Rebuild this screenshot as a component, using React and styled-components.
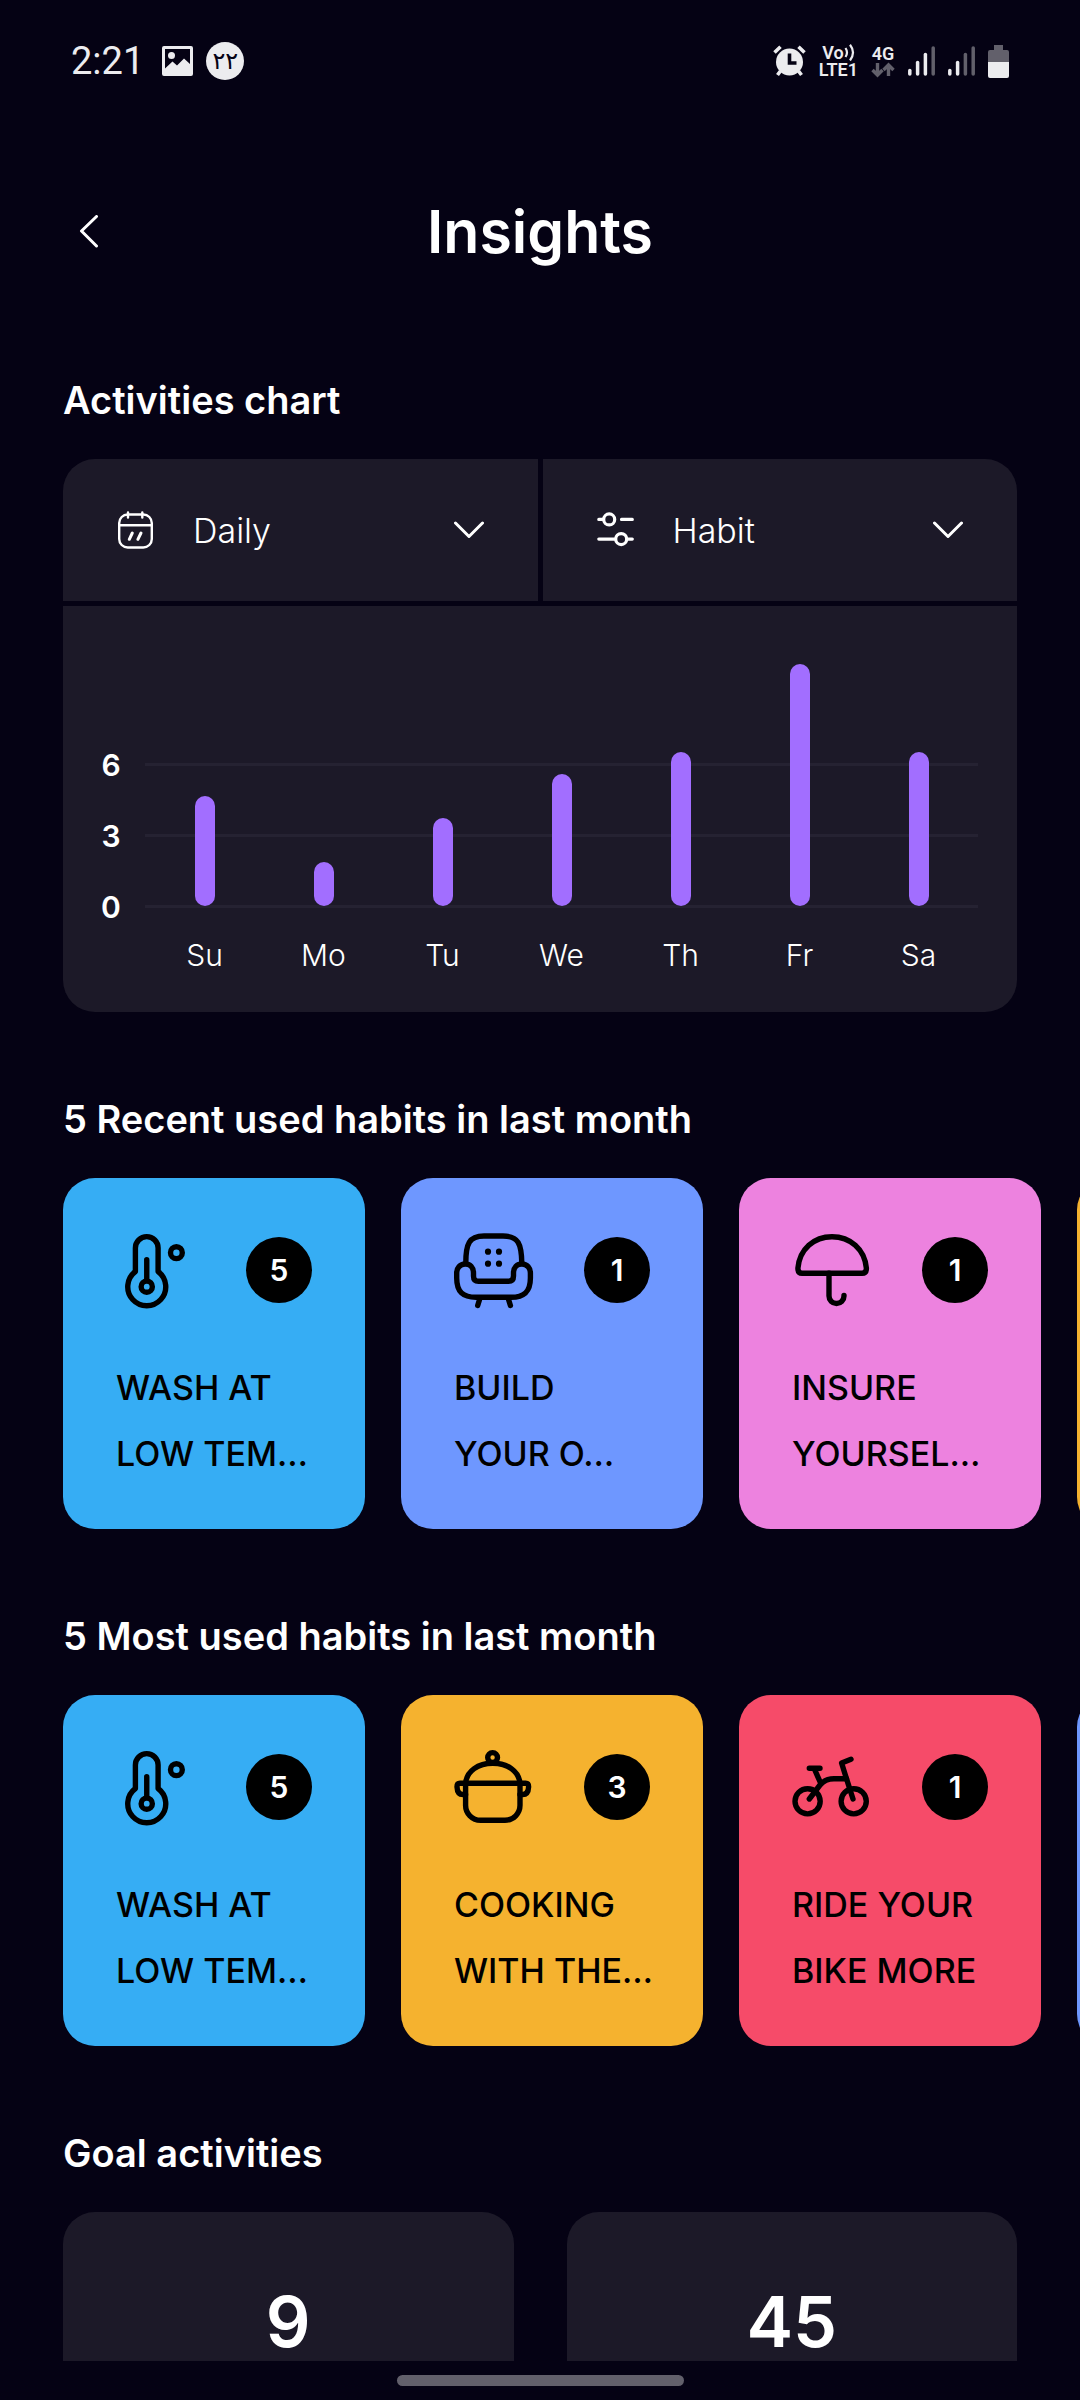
import React from "react";
import styled, { createGlobalStyle } from "styled-components";

const color = {
  page: "#050214",
  panel: "#1c1928",
  line: "#252232",
  text: "#ffffff",
  status: "#ececef",
  faded: "#62606b",
  bar: "#a26eff",
  sky: "#36adf4",
  blue: "#6e97ff",
  pink: "#ed82df",
  amber: "#f5b22f",
  red: "#f64b69",
};

const GlobalStyle = createGlobalStyle`
  * { box-sizing: border-box; }
  body {
    margin: 0;
    background: ${color.page};
    color: ${color.text};
    font-family: Inter, "Liberation Sans", sans-serif;
  }
`;

const Screen = styled.div`
  display: flex;
  flex-direction: column;
  height: 100vh;
  overflow: hidden;
`;

/* ---------- status bar ---------- */

const StatusBar = styled.div`
  display: flex;
  flex: none;
  align-items: center;
  justify-content: space-between;
  height: 122px;
  padding: 0 71px;
  color: ${color.status};
  font-family: Roboto, sans-serif;
`;

const StatusGroup = styled.div`
  display: flex;
  align-items: center;
  gap: 13px;
`;

const Clock = styled.time`
  margin-right: 5px;
  font-size: 38px;
  line-height: 40px;
`;

const DateBadge = styled.span`
  display: flex;
  align-items: center;
  justify-content: center;
  width: 38px;
  height: 38px;
  border-radius: 50%;
  background: ${color.status};
  color: ${color.page};
  font: 400 24px/30px "DejaVu Sans", sans-serif;
`;

const NetworkLabel = styled.span`
  display: flex;
  flex-direction: column;
  align-items: center;
  font-size: 18px;
  font-weight: 600;
  line-height: 17px;
`;

const NetworkLine = styled.span`
  display: flex;
  align-items: center;
`;

/* ---------- header ---------- */

const Header = styled.header`
  display: grid;
  flex: none;
  grid-template-columns: 1fr auto 1fr;
  align-items: center;
  padding: 70px 63px 103px;
`;

const BackButton = styled.button`
  display: flex;
  align-items: center;
  justify-content: center;
  width: 52px;
  height: 52px;
  padding: 0;
  border: 0;
  background: none;
  color: inherit;
  cursor: pointer;
`;

const Title = styled.h1`
  margin: 0;
  font-size: 59px;
  font-weight: 600;
  line-height: 80px;
`;

/* ---------- sections ---------- */

const Content = styled.main`
  display: flex;
  flex: 1;
  flex-direction: column;
  gap: 82px;
  min-height: 0;
  overflow-y: auto;
  scrollbar-width: none;
`;

const Section = styled.section`
  display: flex;
  flex: none;
  flex-direction: column;
  gap: 34px;
  padding: 0 63px;
`;

const SectionTitle = styled.h2`
  margin: 0;
  font-size: 38px;
  font-weight: 600;
  line-height: 50px;
`;

/* ---------- chart ---------- */

const ChartCard = styled.div`
  display: grid;
  grid-template-columns: 1fr 1fr;
  gap: 5px;
  overflow: hidden;
  border-radius: 32px;
`;

const Filter = styled.div`
  display: flex;
  align-items: center;
  gap: 38px;
  height: 142px;
  padding: 0 54px;
  background: ${color.panel};
`;

const FilterSelect = styled.select`
  flex: 1;
  min-width: 0;
  padding: 2px 0 0;
  border: 0;
  outline: 0;
  appearance: none;
  background: ${color.panel};
  color: inherit;
  font: 300 34px/48px Inter, "Liberation Sans", sans-serif;
`;

const Plot = styled.div`
  display: grid;
  grid-column: 1 / -1;
  padding: 58px 39px 37px 38px;
  background: ${color.panel};
`;

const Scale = styled.div`
  display: flex;
  grid-area: 1 / 1;
  flex-direction: column;
  align-self: end;
  padding-bottom: 33px;
`;

const ScaleRow = styled.div`
  display: flex;
  align-items: center;
  gap: 24px;
  height: 71px;
  font-size: 30px;
  font-weight: 600;

  &::after {
    content: "";
    flex: 1;
    height: 3px;
    background: ${color.line};
  }
`;

const ScaleValue = styled.span`
  width: 20px;
  text-align: center;
`;

const Days = styled.div`
  display: grid;
  grid-area: 1 / 1;
  grid-template-columns: repeat(7, 1fr);
  align-items: end;
  padding-left: 44px;
`;

const Day = styled.div`
  display: flex;
  flex-direction: column;
  align-items: center;
  gap: 29px;
`;

const Bar = styled.div`
  width: 20px;
  border-radius: 10px;
  background: ${color.bar};
`;

const DayName = styled.span`
  font-size: 30px;
  font-weight: 300;
  line-height: 40px;
`;

/* ---------- habit cards ---------- */

const CardStrip = styled.div`
  display: flex;
  gap: 36px;
  margin-right: -63px;
  overflow-x: auto;
  scrollbar-width: none;
`;

const Card = styled.article`
  display: flex;
  flex: none;
  flex-direction: column;
  gap: 45px;
  width: 302px;
  padding: 52px 53px 42px;
  border-radius: 32px;
  background: ${(p) => p.$tint};
  color: #000;
`;

const CardTop = styled.div`
  display: flex;
  align-items: center;
  justify-content: space-between;
`;

const Count = styled.span`
  display: flex;
  align-items: center;
  justify-content: center;
  width: 66px;
  height: 66px;
  border-radius: 50%;
  background: #000;
  color: ${color.text};
  font-size: 30px;
  font-weight: 600;
`;

const HabitName = styled.h3`
  margin: 0;
  font-size: 34px;
  font-weight: 500;
  line-height: 66px;
  white-space: pre;
`;

/* ---------- goals ---------- */

const Goals = styled.div`
  display: grid;
  grid-template-columns: 1fr 1fr;
  gap: 53px;
`;

const GoalCard = styled.div`
  min-height: 240px;
  padding-top: 74px;
  border-radius: 32px;
  background: ${color.panel};
  font-size: 70px;
  font-weight: 600;
  line-height: 72px;
  text-align: center;
`;

const NavBar = styled.div`
  display: flex;
  flex: none;
  justify-content: center;
  height: 39px;
  padding-top: 14px;
`;

const NavHandle = styled.div`
  width: 287px;
  height: 11px;
  border-radius: 6px;
  background: ${color.faded};
`;

/* ---------- icons ---------- */

const HabitSvg = ({ children }) => (
  <svg width="80" height="80" viewBox="0 0 80 80" fill="none" stroke="#000" strokeWidth="5.4" strokeLinecap="round" strokeLinejoin="round" aria-hidden="true">
    {children}
  </svg>
);

const Thermometer = () => (
  <HabitSvg>
    <path d="M19.4 41.5V18a11.35 11.35 0 0 1 22.7 0V41.5A19 19 0 1 1 19.4 41.5Z" />
    <circle cx="30.75" cy="56.7" r="5.6" />
    <path d="M30.75 29.7V50" />
    <circle cx="60.4" cy="22.7" r="5.9" />
  </HabitSvg>
);

const Armchair = () => (
  <HabitSvg>
    <path d="M11.8 33C11.8 14 15 6 30 6H49C64.5 6 67.5 14 67.8 33" />
    <path d="M11.1 34c5 0 8.4 3.5 8.4 9v3q0 5.3 5 5.3H54.5q5 0 5-5.3v-3c0-5.5 3.5-9 8.5-9s8.4 4 8.4 9V48C76.4 62 70 67.3 57 67.3H22C9 67.3 2.7 62 2.7 48V43c0-5 3.4-9 8.4-9z" />
    <path d="M25.4 70L23.7 75.5M54.7 70L56.4 75.5" />
    <g fill="#000" stroke="none">
      <circle cx="34" cy="21.7" r="3.1" />
      <circle cx="45" cy="21.7" r="3.1" />
      <circle cx="34" cy="33.7" r="3.1" />
      <circle cx="45" cy="33.7" r="3.1" />
    </g>
  </HabitSvg>
);

const Umbrella = () => (
  <HabitSvg>
    <path d="M10 43.3q-4.1 0-4.1-5C7.5 19 22 6.7 40 6.7S72.7 19 74.4 38.3q0 5-4.3 5z" />
    <path d="M37 43.3V66a7.5 7.5 0 0 0 15 0V65.5" />
  </HabitSvg>
);

const Pot = () => (
  <HabitSvg>
    <circle cx="38.6" cy="10.5" r="4.9" />
    <path d="M11.6 36C13 24 24 16.3 38.8 16.3S64.5 24 66 36" />
    <path d="M11.6 36.3V58a15 15 0 0 0 15 15.3H51a15 15 0 0 0 15-15.3V36.3" />
    <path d="M11.6 47.5H9q-5.7 0-6-7.7q0-3.5 3-3.5H71.6q3 0 3 3.5q-.3 7.7-6 7.7H66" />
  </HabitSvg>
);

const Bike = () => (
  <HabitSvg>
    <circle cx="15.6" cy="54.3" r="12.6" />
    <circle cx="61.7" cy="54.3" r="12.6" />
    <path d="M17.3 21.3H28M22.4 22L28.6 36" />
    <path d="M17.3 52L28 38Q33 31.7 42 31.7H54.5" />
    <path d="M59 12.3L49.6 16L54.5 31.7L61 52" />
  </HabitSvg>
);

const CalendarIcon = () => (
  <svg width="38" height="38" viewBox="0 0 38 38" fill="none" stroke="#fff" strokeWidth="2.4" strokeLinecap="round" aria-hidden="true">
    <rect x="2.2" y="3.5" width="32.6" height="33" rx="8.5" />
    <path d="M2.2 14.2H34.8M11 1.5V6.5M25.3 1.5V6.5" />
    <path d="M15.3 22L12.3 28.3M24 22L20.9 28.3" strokeWidth="3" />
  </svg>
);

const SlidersIcon = () => (
  <svg width="38" height="38" viewBox="0 0 38 38" fill="none" stroke="#fff" strokeWidth="3.2" strokeLinecap="round" aria-hidden="true">
    <circle cx="12.2" cy="8.4" r="5.5" />
    <circle cx="24.2" cy="28.1" r="5.5" />
    <path d="M1.8 8.4H6M24.5 8.4H35.3M1.8 28.1H18M30.5 28.1H35.3" />
  </svg>
);

const Chevron = () => (
  <svg width="30" height="18" viewBox="0 0 30 18" fill="none" stroke="#fff" strokeWidth="3" strokeLinecap="round" strokeLinejoin="round" aria-hidden="true">
    <path d="M1.5 2L15 15.5L28.5 2" />
  </svg>
);

const BackIcon = () => (
  <svg width="20" height="34" viewBox="0 0 20 34" fill="none" stroke="#fff" strokeWidth="3" strokeLinecap="round" strokeLinejoin="round" aria-hidden="true">
    <path d="M17.5 1.5L2.5 16L17.5 31" />
  </svg>
);

const PictureIcon = () => (
  <svg width="31" height="30" viewBox="0 0 31 30" aria-hidden="true">
    <path fill={color.status} fillRule="evenodd" d="M2 0H29Q31 0 31 2V28Q31 30 29 30H2Q0 30 0 28V2Q0 0 2 0ZM3 3V22.5L10.5 15.5L15 19.5L22 12.5L28 18V3Z" />
    <circle cx="9.5" cy="9.5" r="3.5" fill={color.status} />
  </svg>
);

const AlarmIcon = () => (
  <svg width="33" height="32" viewBox="0 0 33 32" aria-hidden="true">
    <circle cx="16.5" cy="17" r="13.5" fill={color.status} />
    <path d="M1.5 7.5L7.5 1.8M31.5 7.5L25.5 1.8M7.5 26L4.5 30M25.5 26L28.5 30" stroke={color.status} strokeWidth="3.6" />
    <path d="M16.5 8.5V18H23.5" fill="none" stroke={color.page} strokeWidth="3.6" />
  </svg>
);

const VoiceWaves = () => (
  <svg width="11" height="17" viewBox="0 0 11 17" fill="none" stroke={color.status} strokeWidth="2.2" aria-hidden="true">
    <path d="M1.5 4Q4.5 8.5 1.5 13M6 0.8Q12 8.5 6 16.5" />
  </svg>
);

const DataArrows = () => (
  <svg width="24" height="16" viewBox="0 0 24 16" fill="none" stroke={color.faded} strokeWidth="3.4" aria-hidden="true">
    <path d="M6.5 1V13M1.5 8L6.5 13L11.5 8M17.5 14V3M12.5 8L17.5 3L22.5 8" />
  </svg>
);

const Signal = ({ level }) => (
  <svg width="27" height="32" viewBox="0 0 27 32" strokeWidth="3.5" strokeLinecap="round" aria-hidden="true">
    {[25.5, 17.5, 9.5, 3].map((top, i) => (
      <path key={top} d={`M${1.8 + i * 7.8} ${top}V29`} stroke={i < level ? color.status : color.faded} />
    ))}
  </svg>
);

const Battery = () => (
  <svg width="21" height="33" viewBox="0 0 21 33" aria-hidden="true">
    <path d="M6 0H15V5H19Q21 5 21 7V17H0V7Q0 5 2 5H6Z" fill={color.faded} />
    <path d="M0 17H21V31Q21 33 19 33H2Q0 33 0 31Z" fill={color.status} />
  </svg>
);

/* ---------- data ---------- */

const UNIT = 22;

const week = [
  ["Su", 5],
  ["Mo", 2],
  ["Tu", 4],
  ["We", 6],
  ["Th", 7],
  ["Fr", 11],
  ["Sa", 7],
];

const recent = [
  { name: "WASH AT\nLOW TEM…", count: 5, tint: color.sky, Icon: Thermometer },
  { name: "BUILD\nYOUR O…", count: 1, tint: color.blue, Icon: Armchair },
  { name: "INSURE\nYOURSEL…", count: 1, tint: color.pink, Icon: Umbrella },
];

const most = [
  { name: "WASH AT\nLOW TEM…", count: 5, tint: color.sky, Icon: Thermometer },
  { name: "COOKING\nWITH THE…", count: 3, tint: color.amber, Icon: Pot },
  { name: "RIDE YOUR\nBIKE MORE", count: 1, tint: color.red, Icon: Bike },
];

const HabitSection = ({ title, habits, nextTint }) => (
  <Section>
    <SectionTitle>{title}</SectionTitle>
    <CardStrip>
      {habits.map(({ name, count, tint, Icon }) => (
        <Card key={name} $tint={tint}>
          <CardTop>
            <Icon />
            <Count>{count}</Count>
          </CardTop>
          <HabitName>{name}</HabitName>
        </Card>
      ))}
      <Card $tint={nextTint} />
    </CardStrip>
  </Section>
);

export default function App() {
  return (
    <Screen>
      <GlobalStyle />
      <StatusBar>
        <StatusGroup>
          <Clock>2:21</Clock>
          <PictureIcon />
          <DateBadge>۲۲</DateBadge>
        </StatusGroup>
        <StatusGroup>
          <AlarmIcon />
          <NetworkLabel>
            <NetworkLine>
              Vo
              <VoiceWaves />
            </NetworkLine>
            <NetworkLine>LTE1</NetworkLine>
          </NetworkLabel>
          <NetworkLabel>
            <NetworkLine>4G</NetworkLine>
            <DataArrows />
          </NetworkLabel>
          <Signal level={3} />
          <Signal level={2} />
          <Battery />
        </StatusGroup>
      </StatusBar>

      <Header>
        <BackButton type="button" aria-label="Back">
          <BackIcon />
        </BackButton>
        <Title>Insights</Title>
      </Header>

      <Content>
        <Section>
          <SectionTitle>Activities chart</SectionTitle>
          <ChartCard>
            <Filter>
              <CalendarIcon />
              <FilterSelect aria-label="Period">
                <option>Daily</option>
              </FilterSelect>
              <Chevron />
            </Filter>
            <Filter>
              <SlidersIcon />
              <FilterSelect aria-label="Activity type">
                <option>Habit</option>
              </FilterSelect>
              <Chevron />
            </Filter>
            <Plot>
              <Scale>
                {[6, 3, 0].map((n) => (
                  <ScaleRow key={n}>
                    <ScaleValue>{n}</ScaleValue>
                  </ScaleRow>
                ))}
              </Scale>
              <Days>
                {week.map(([day, value]) => (
                  <Day key={day}>
                    <Bar style={{ height: value * UNIT }} />
                    <DayName>{day}</DayName>
                  </Day>
                ))}
              </Days>
            </Plot>
          </ChartCard>
        </Section>

        <HabitSection title="5 Recent used habits in last month" habits={recent} nextTint={color.amber} />
        <HabitSection title="5 Most used habits in last month" habits={most} nextTint={color.blue} />

        <Section>
          <SectionTitle>Goal activities</SectionTitle>
          <Goals>
            <GoalCard>9</GoalCard>
            <GoalCard>45</GoalCard>
          </Goals>
        </Section>
      </Content>

      <NavBar>
        <NavHandle />
      </NavBar>
    </Screen>
  );
}
